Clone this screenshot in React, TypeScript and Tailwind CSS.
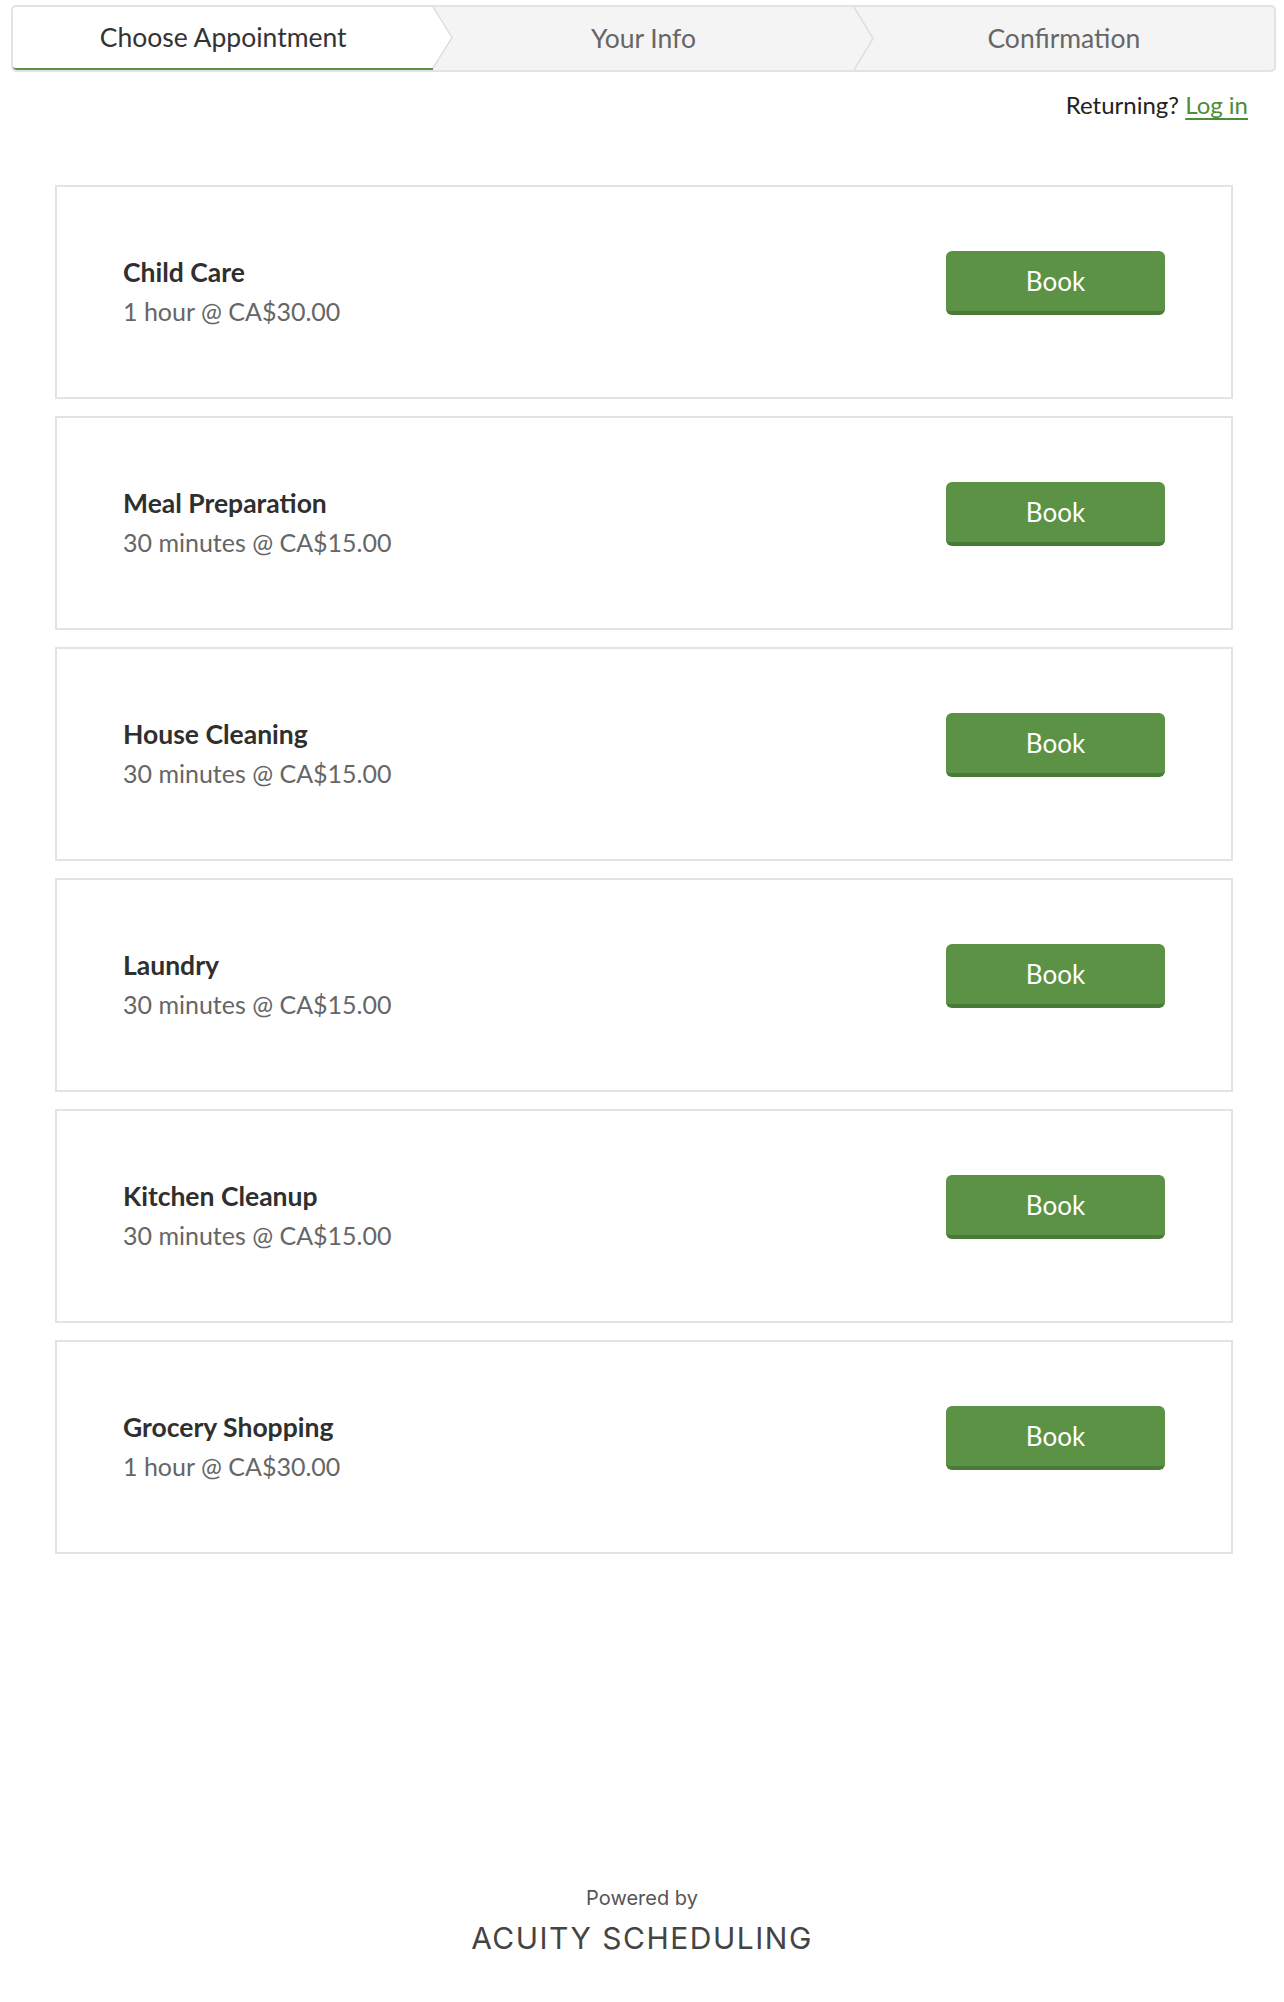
import React from "react";

const services = [
  { name: "Child Care", detail: "1 hour @ CA$30.00" },
  { name: "Meal Preparation", detail: "30 minutes @ CA$15.00" },
  { name: "House Cleaning", detail: "30 minutes @ CA$15.00" },
  { name: "Laundry", detail: "30 minutes @ CA$15.00" },
  { name: "Kitchen Cleanup", detail: "30 minutes @ CA$15.00" },
  { name: "Grocery Shopping", detail: "1 hour @ CA$30.00" },
];

function Chevron({ fillLeft }: { fillLeft: string }) {
  return (
    <svg
      className="absolute top-0 right-[-20px] h-full w-[21px] z-10"
      viewBox="0 0 21 64"
      preserveAspectRatio="none"
    >
      <polygon points="0,0 1,0 20,32 1,64 0,64" fill={fillLeft} />
      <polyline points="1,0 20,32 1,64" fill="none" stroke="#dedede" strokeWidth="1.5" />
    </svg>
  );
}

function Steps() {
  return (
    <div className="ml-[11px] mr-[8px] mt-[5px] flex h-[67px] rounded-[5px] border-2 border-[#e3e3e3] bg-[#f4f4f4] text-[26.5px]">
      <div className="relative flex flex-1 items-center justify-center rounded-l-[4px] border-b-[2px] border-[#5b9346] bg-white text-[#333]">
        <span className="pt-[1px]">Choose Appointment</span>
        <Chevron fillLeft="#ffffff" />
      </div>
      <div className="relative flex flex-1 items-center justify-center text-[#666]">
        <span>Your Info</span>
        <Chevron fillLeft="#f4f4f4" />
      </div>
      <div className="flex flex-1 items-center justify-center text-[#666]">
        <span>Confirmation</span>
      </div>
    </div>
  );
}

function ServiceCard({ name, detail }: { name: string; detail: string }) {
  return (
    <div className="flex h-[214px] items-center justify-between border-2 border-[#e3e3e3] bg-white pl-[66px] pr-[66px]">
      <div className="flex flex-col pt-[2px]">
        <span className="text-[26.5px] font-bold leading-[36px] text-[#2f2f2f]">{name}</span>
        <span className="text-[25px] leading-[42px] text-[#666]">{detail}</span>
      </div>
      <button className="mb-[18px] h-[64px] w-[219px] rounded-[6px] border-b-[4px] border-[#4a7a37] bg-[#5c9246] text-[26px] text-white">
        Book
      </button>
    </div>
  );
}

export default function App() {
  return (
    <div
      className="flex min-h-[2002px] flex-col bg-white"
      style={{ fontFamily: "Lato, 'Noto Sans', sans-serif" }}
    >
      <Steps />
      <div className="mr-[36px] mt-[15px] text-right text-[24px] text-[#222]">
        Returning?{" "}
        <a className="text-[#4f8c3b] underline underline-offset-4" href="#">
          Log in
        </a>
      </div>
      <div className="ml-[55px] mr-[51px] mt-[62px] flex flex-col gap-[17px]">
        {services.map((s) => (
          <ServiceCard key={s.name} name={s.name} detail={s.detail} />
        ))}
      </div>
      <div className="mt-[329px] flex flex-col items-center text-[#555]" style={{ fontFamily: "Inter, 'Liberation Sans', sans-serif" }}>
        <span className="text-[20px]">Powered by</span>
        <span className="mt-[3px] text-[30px] tracking-[0.05em] text-[#444]">ACUITY SCHEDULING</span>
      </div>
    </div>
  );
}
